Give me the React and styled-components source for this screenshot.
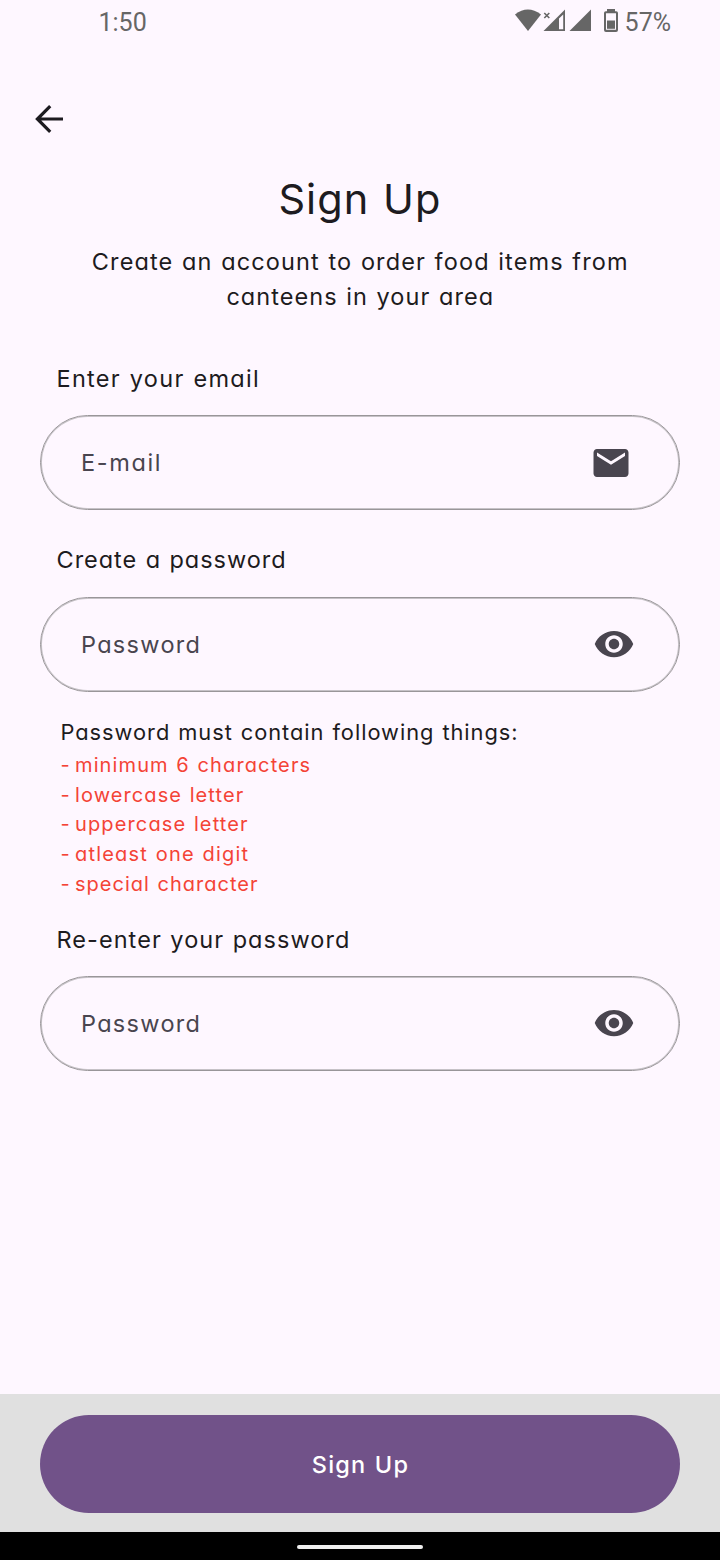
import React from 'react';
import styled, { createGlobalStyle } from 'styled-components';

const GlobalStyle = createGlobalStyle`
  * { box-sizing: border-box; }
  body { margin: 0; background: #fef7ff; }
  button, input { font: inherit; }
`;

const Screen = styled.div`
  width: 720px;
  height: 1560px;
  display: flex;
  flex-direction: column;
  background: #fef7ff;
  color: #1d1b20;
  font-family: Inter, "Liberation Sans", sans-serif;
  font-feature-settings: "cv11" 1;
  font-size: 23.5px;
  word-spacing: 0.9px;
`;

const StatusBar = styled.header`
  height: 44px;
  padding: 0 49px 0 98.5px;
  display: flex;
  justify-content: space-between;
  align-items: center;
  font-family: Roboto, sans-serif;
  font-size: 25px;
  line-height: 44px;
  word-spacing: 0;
  color: #666;
`;

const StatusText = styled.span`
  padding-top: 2px;
`;

const StatusIcons = styled.div`
  display: flex;
  align-items: center;
`;

const StatusGlyphs = styled.svg`
  width: 106px;
  height: 44px;
  margin-right: 4px;
`;

const BackButton = styled.button`
  width: 40px;
  height: 40px;
  margin: 55px 0 0 29px;
  padding: 0;
  border: 0;
  background: none;
  color: inherit;
  svg { display: block; }
`;

const Title = styled.h1`
  margin: 35px 0 0;
  font-size: 41.5px;
  line-height: 50px;
  font-weight: 400;
  text-align: center;
  letter-spacing: ${(p) => p.$track}px;
`;

const Subtitle = styled.p`
  margin: 20px 0 0;
  line-height: 35px;
  text-align: center;
`;

const Line = styled.span`
  display: block;
  padding-left: 0.5px;
  letter-spacing: ${(p) => p.$track}px;
`;

const Form = styled.form`
  padding: 50px 40px 0;
  display: flex;
  flex-direction: column;
  flex: 1;
`;

const Label = styled.label`
  margin-top: ${(p) => p.$gap || 0}px;
  padding-left: 16.5px;
  line-height: 30px;
  letter-spacing: ${(p) => p.$track}px;
`;

const Field = styled.div`
  height: 95px;
  margin-top: ${(p) => p.$gap}px;
  padding: ${(p) => (p.$low ? '1px 45px 0 40px' : '0 45px 1px 40px')};
  display: flex;
  align-items: center;
  justify-content: space-between;
  border: 1px solid #999699;
  border-radius: 47.5px;
  box-shadow: inset 0 0 0 1px #c6c2c7;
`;

const Input = styled.input`
  flex: 1;
  min-width: 0;
  padding: ${(p) => p.$drop || 0}px 0 ${(p) => p.$lift || 0}px;
  border: 0;
  outline: 0;
  background: none;
  color: inherit;
  font-feature-settings: inherit;
  letter-spacing: ${(p) => p.$track}px;
  &::placeholder { color: #49454f; opacity: 1; }
`;

const FieldIcon = styled.svg`
  display: block;
  width: ${(p) => p.$size}px;
  height: ${(p) => p.$size}px;
  margin-right: ${(p) => p.$inset || 0}px;
  fill: #49454f;
`;

const Rules = styled.section`
  margin-top: 25.5px;
  padding-left: 20.5px;
`;

const RulesHeading = styled.p`
  margin: 0 0 5.5px;
  font-size: 21.8px;
  line-height: 28px;
  letter-spacing: ${(p) => p.$track}px;
`;

const RuleList = styled.ul`
  margin: 0;
  padding: 0;
  list-style: none;
  font-size: 20px;
  line-height: 29.7px;
  color: #f44336;
`;

const Rule = styled.li`
  display: flex;
  letter-spacing: ${(p) => p.$track}px;
  &::before { content: "-"; width: 14.5px; letter-spacing: 0; }
`;

const Footer = styled.footer`
  height: 138.5px;
  padding: 21px 40px 19px;
  background: #e0e0e0;
`;

const SubmitButton = styled.button`
  display: block;
  width: 100%;
  height: 98px;
  padding: 2px 0 0 1px;
  border: 0;
  border-radius: 49px;
  background: #715289;
  color: #fff;
  font-weight: 500;
  font-feature-settings: inherit;
  word-spacing: inherit;
  letter-spacing: ${(p) => p.$track}px;
`;

const NavBar = styled.nav`
  height: 28px;
  padding-top: 13px;
  background: #000;
`;

const NavHandle = styled.div`
  width: 126px;
  height: 4px;
  margin: 0 auto;
  border-radius: 2px;
  background: #efefef;
`;

const Eye = () => (
  <FieldIcon viewBox="0 0 24 24" $size={42} $inset={-1}>
    <path d="M12 4.5C7 4.5 2.73 7.61 1 12c1.73 4.39 6 7.5 11 7.5s9.27-3.11 11-7.5c-1.73-4.39-6-7.5-11-7.5zM12 17c-2.76 0-5-2.24-5-5s2.24-5 5-5 5 2.24 5 5-2.24 5-5 5zm0-8c-1.66 0-3 1.34-3 3s1.34 3 3 3 3-1.34 3-3-1.34-3-3-3z" />
  </FieldIcon>
);

const Mail = () => (
  <FieldIcon viewBox="0 0 24 24" $size={42} $inset={2}>
    <path d="M20 4H4c-1.1 0-1.99.9-1.99 2L2 18c0 1.1.9 2 2 2h16c1.1 0 2-.9 2-2V6c0-1.1-.9-2-2-2zm0 4l-8 5-8-5V6l8 5 8-5v2z" />
  </FieldIcon>
);

const rules = [
  ['minimum 6 characters', 1.12],
  ['lowercase letter', 1.09],
  ['uppercase letter', 1.13],
  ['atleast one digit', 1.2],
  ['special character', 1.02],
];

export default function App() {
  return (
    <Screen>
      <GlobalStyle />
      <StatusBar>
        <StatusText>1:50</StatusText>
        <StatusIcons>
          <StatusGlyphs viewBox="0 0 106 44" fill="#666">
            <path d="M0 14.6Q12.7 4.4 26 14.6L13 31Z" />
            <path d="M29.3 13l5 5m0-5l-5 5" stroke="#666" strokeWidth="1.6" />
            <path fillRule="evenodd" d="M50 9.5V31H28.5ZM48.2 14.5L44 18.5V29.3H48.2Z" />
            <path d="M76 9.5V31H54.5Z" />
            <path fillRule="evenodd" d="M92 9h8v2.2h1.2Q103 11.2 103 13v17q0 2-2 2H91q-2 0-2-2V13q0-1.8 1.8-1.8H92ZM91 13.3V29.8H101V13.3Z" />
            <path d="M92 20.5h8v8.3h-8z" />
          </StatusGlyphs>
          <StatusText>57%</StatusText>
        </StatusIcons>
      </StatusBar>
      <BackButton aria-label="Back">
        <svg width="40" height="40" viewBox="0 0 40 40" fill="none" stroke="#1d1b20" strokeWidth="3.2">
          <path d="M34 20H8M21.2 7.2L8.4 20L21.2 32.8" />
        </svg>
      </BackButton>
      <Title $track={1.1}>Sign Up</Title>
      <Subtitle>
        <Line $track={1.12}>Create an account to order food items from</Line>
        <Line $track={1.06}>canteens in your area</Line>
      </Subtitle>
      <Form>
        <Label htmlFor="email" $track={1.3}>Enter your email</Label>
        <Field $gap={21} $low>
          <Input id="email" placeholder="E-mail" $track={1.65} $lift={2} />
          <Mail />
        </Field>
        <Label htmlFor="password" $gap={35} $track={0.97}>Create a password</Label>
        <Field $gap={22}>
          <Input id="password" type="password" placeholder="Password" $track={1.3} $drop={1} />
          <Eye />
        </Field>
        <Rules>
          <RulesHeading $track={0.98}>Password must contain following things:</RulesHeading>
          <RuleList>
            {rules.map(([text, track]) => (
              <Rule key={text} $track={track}>{text}</Rule>
            ))}
          </RuleList>
        </Rules>
        <Label htmlFor="confirm" $gap={25} $track={1.05}>Re-enter your password</Label>
        <Field $gap={21.5}>
          <Input id="confirm" type="password" placeholder="Password" $track={1.3} $drop={1} />
          <Eye />
        </Field>
      </Form>
      <Footer>
        <SubmitButton type="button" $track={1.2}>Sign Up</SubmitButton>
      </Footer>
      <NavBar>
        <NavHandle />
      </NavBar>
    </Screen>
  );
}
